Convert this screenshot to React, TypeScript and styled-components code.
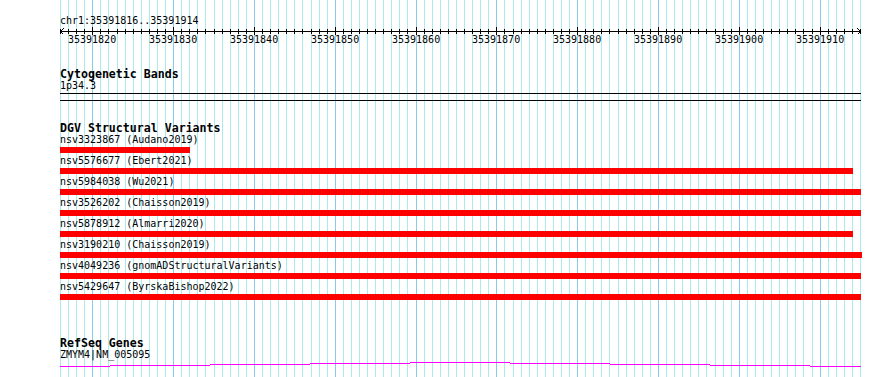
import React from "react";
import styled, { createGlobalStyle } from "styled-components";

const START = 35391816;
const BASES = 99;
const LEFT = 60;
const PX_PER_BASE = 800 / BASES;

// pixel column of the left edge of base i
const baseX = (i: number) => Math.floor(LEFT + 0.5 + i * PX_PER_BASE);

interface Variant {
  id: string;
  source: string;
  end: number;
}

const variants: Variant[] = [
  { id: "nsv3323867", source: "Audano2019", end: 190 },
  { id: "nsv5576677", source: "Ebert2021", end: 853 },
  { id: "nsv5984038", source: "Wu2021", end: 861 },
  { id: "nsv3526202", source: "Chaisson2019", end: 861 },
  { id: "nsv5878912", source: "Almarri2020", end: 853 },
  { id: "nsv3190210", source: "Chaisson2019", end: 862 },
  { id: "nsv4049236", source: "gnomADStructuralVariants", end: 861 },
  { id: "nsv5429647", source: "ByrskaBishop2022", end: 861 },
];

// RefSeq intron line, stepped by one pixel every 100px
const geneSteps = [
  { from: 60, to: 110, y: 5 },
  { from: 110, to: 210, y: 4 },
  { from: 210, to: 310, y: 3 },
  { from: 310, to: 410, y: 2 },
  { from: 410, to: 510, y: 1 },
  { from: 510, to: 610, y: 2 },
  { from: 610, to: 710, y: 3 },
  { from: 710, to: 810, y: 4 },
  { from: 810, to: 861, y: 5 },
];

const GlobalStyle = createGlobalStyle`
  html, body {
    margin: 0;
    padding: 0;
    background: #ffffff;
  }
  body {
    font-family: "DejaVu Sans Mono", "Liberation Mono", monospace;
    color: #000000;
  }
`;

const Page = styled.div`
  position: relative;
  width: 890px;
  height: 377px;
  overflow: hidden;
  background: #ffffff;
`;

const GuideLayer = styled.svg`
  position: absolute;
  left: 0;
  top: 0;
  z-index: 0;
`;

const Tracks = styled.div`
  position: relative;
  z-index: 1;
  display: flex;
  flex-direction: column;
  width: 801px;
  padding: 16px 0 0 ${LEFT}px;
`;

const Label = styled.div<{ $top?: number }>`
  height: 10px;
  margin-top: ${(p) => p.$top ?? 0}px;
  font-size: 10px;
  line-height: 10px;
  white-space: nowrap;
`;

const TrackTitle = styled.div<{ $top: number }>`
  height: 12px;
  margin-top: ${(p) => p.$top}px;
  font-size: 11.6px;
  line-height: 12px;
  font-weight: bold;
  white-space: nowrap;
`;

const Ruler = styled.div`
  position: relative;
  height: 19px;

  svg {
    display: block;
  }
`;

const RulerNumber = styled.span`
  position: absolute;
  top: 9px;
  width: 48px;
  text-align: center;
  font-size: 10px;
  line-height: 10px;
`;

const Band = styled.div`
  height: 6px;
  margin-top: 2px;
  border-top: 1px solid #000000;
  border-bottom: 1px solid #000000;
`;

const VariantList = styled.div`
  display: flex;
  flex-direction: column;
  margin-top: 1px;
`;

const VariantItem = styled.div`
  display: flex;
  flex-direction: column;
`;

const VariantBar = styled.div<{ $width: number }>`
  width: ${(p) => p.$width}px;
  height: 6px;
  margin: 2px 0 3px;
  background: #ff0000;
`;

const GeneLine = styled.svg`
  display: block;
  margin-top: 1px;
`;

const Guides = () => (
  <GuideLayer width={890} height={377} shapeRendering="crispEdges">
    {Array.from({ length: BASES + 1 }, (_, i) => (
      <rect
        key={i}
        x={baseX(i)}
        y={0}
        width={1}
        height={377}
        fill={(START + i) % 10 === 0 ? "#87ccee" : "#aaeaee"}
      />
    ))}
  </GuideLayer>
);

const BaseRuler = () => {
  const ticks = Array.from({ length: BASES + 1 }, (_, i) => i);
  const majors = ticks.filter((i) => (START + i) % 10 === 0 && i < BASES);

  return (
    <Ruler>
      <svg width={802} height={9} shapeRendering="crispEdges">
        <rect x={0} y={5} width={801} height={1} fill="#000" />
        {ticks.map((i) => {
          const major = (START + i) % 10 === 0;
          return (
            <rect
              key={i}
              x={baseX(i) - LEFT}
              y={major ? 1 : 3}
              width={1}
              height={major ? 8 : 5}
              fill="#000"
            />
          );
        })}
        <path d="M3.5 2.5 L0.5 5.5 L3.5 8.5" stroke="#000" fill="none" />
        <path d="M797.5 2.5 L800.5 5.5 L797.5 8.5" stroke="#000" fill="none" />
      </svg>
      {majors.map((i) => (
        <RulerNumber key={i} style={{ left: baseX(i) - LEFT - 24 }}>
          {START + i}
        </RulerNumber>
      ))}
    </Ruler>
  );
};

const App = () => {
  return (
    <Page>
      <GlobalStyle />
      <Guides />
      <Tracks>
        <Label>chr1:35391816..35391914</Label>
        <BaseRuler />

        <TrackTitle $top={23}>Cytogenetic Bands</TrackTitle>
        <Label $top={1}>1p34.3</Label>
        <Band />

        <TrackTitle $top={21}>DGV Structural Variants</TrackTitle>
        <VariantList>
          {variants.map((v) => (
            <VariantItem key={v.id + v.source}>
              <Label>
                {v.id} ({v.source})
              </Label>
              <VariantBar $width={v.end - LEFT} />
            </VariantItem>
          ))}
        </VariantList>

        <TrackTitle $top={34}>RefSeq Genes</TrackTitle>
        <Label $top={1}>ZMYM4|NM_005095</Label>
        <GeneLine width={801} height={6} shapeRendering="crispEdges">
          {geneSteps.map((s) => (
            <rect
              key={s.from}
              x={s.from - LEFT}
              y={s.y}
              width={s.to - s.from}
              height={1}
              fill="#ff00ff"
            />
          ))}
        </GeneLine>
      </Tracks>
    </Page>
  );
};

export default App;
